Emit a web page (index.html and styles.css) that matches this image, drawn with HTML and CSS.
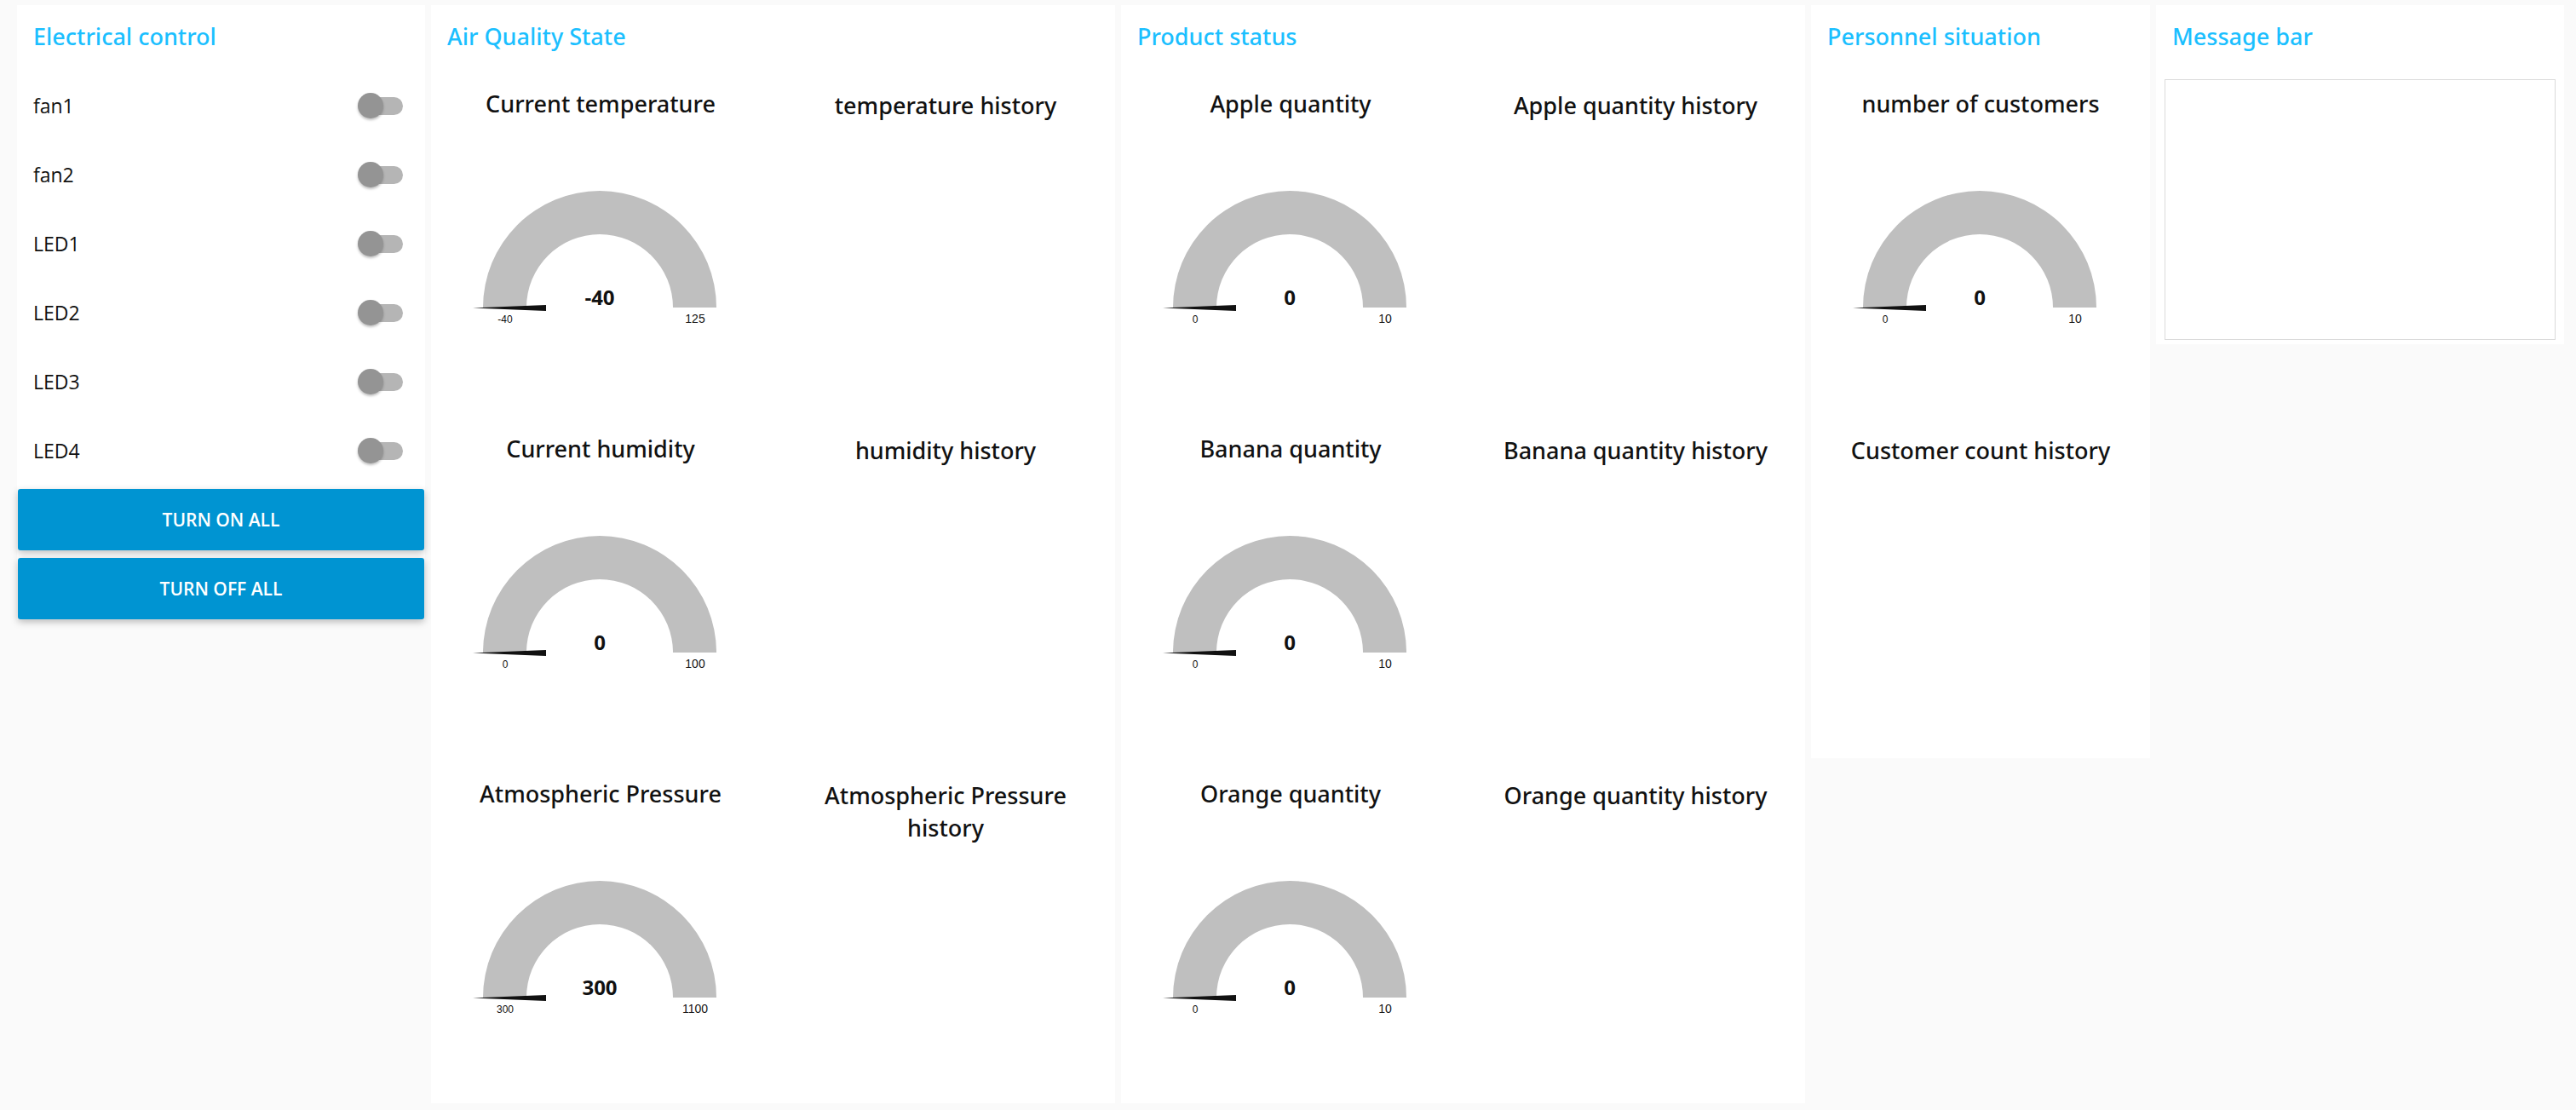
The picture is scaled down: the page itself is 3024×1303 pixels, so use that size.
FILE: index.html
```html
<!DOCTYPE html>
<html lang="en">
<head>
<meta charset="utf-8">
<meta name="viewport" content="width=device-width, initial-scale=1">
<title>Dashboard</title>
<link rel="stylesheet" href="styles.css">
</head>
<body>
<main class="dashboard">
  <section class="panel">
    <h2 class="panel-title">Electrical control</h2>
    <div class="controls">
      <label class="switch-row"><span>fan1</span><input class="switch" type="checkbox" role="switch"></label>
      <label class="switch-row"><span>fan2</span><input class="switch" type="checkbox" role="switch"></label>
      <label class="switch-row"><span>LED1</span><input class="switch" type="checkbox" role="switch"></label>
      <label class="switch-row"><span>LED2</span><input class="switch" type="checkbox" role="switch"></label>
      <label class="switch-row"><span>LED3</span><input class="switch" type="checkbox" role="switch"></label>
      <label class="switch-row"><span>LED4</span><input class="switch" type="checkbox" role="switch"></label>
      <button class="button" type="button">TURN ON ALL</button>
      <button class="button" type="button">TURN OFF ALL</button>
    </div>
  </section>

  <section class="panel">
    <h2 class="panel-title">Air Quality State</h2>
    <div class="cards two-columns">
      <article class="card">
        <h3 class="card-title">Current temperature</h3>
        <svg class="gauge" viewBox="0 0 396 220"><path class="gauge-track" d="M60 173A137 137 0 0 1 334 173H283A86 86 0 0 0 111 173Z"/><path class="gauge-needle" d="M48 173.500L134 170V177Z"/><text class="gauge-value" x="197" y="170">-40</text><text class="gauge-min" x="86" y="191">-40</text><text class="gauge-max" x="309" y="191">125</text></svg>
      </article>
      <article class="card"><h3 class="card-title history">temperature history</h3></article>
      <article class="card">
        <h3 class="card-title">Current humidity</h3>
        <svg class="gauge" viewBox="0 0 396 220"><path class="gauge-track" d="M60 173A137 137 0 0 1 334 173H283A86 86 0 0 0 111 173Z"/><path class="gauge-needle" d="M48 173.500L134 170V177Z"/><text class="gauge-value" x="197" y="170">0</text><text class="gauge-min" x="86" y="191">0</text><text class="gauge-max" x="309" y="191">100</text></svg>
      </article>
      <article class="card"><h3 class="card-title history">humidity history</h3></article>
      <article class="card">
        <h3 class="card-title">Atmospheric Pressure</h3>
        <svg class="gauge" viewBox="0 0 396 220"><path class="gauge-track" d="M60 173A137 137 0 0 1 334 173H283A86 86 0 0 0 111 173Z"/><path class="gauge-needle" d="M48 173.500L134 170V177Z"/><text class="gauge-value" x="197" y="170">300</text><text class="gauge-min" x="86" y="191">300</text><text class="gauge-max" x="309" y="191">1100</text></svg>
      </article>
      <article class="card"><h3 class="card-title history">Atmospheric Pressure history</h3></article>
    </div>
  </section>

  <section class="panel">
    <h2 class="panel-title">Product status</h2>
    <div class="cards two-columns">
      <article class="card">
        <h3 class="card-title">Apple quantity</h3>
        <svg class="gauge" viewBox="0 0 396 220"><path class="gauge-track" d="M60 173A137 137 0 0 1 334 173H283A86 86 0 0 0 111 173Z"/><path class="gauge-needle" d="M48 173.500L134 170V177Z"/><text class="gauge-value" x="197" y="170">0</text><text class="gauge-min" x="86" y="191">0</text><text class="gauge-max" x="309" y="191">10</text></svg>
      </article>
      <article class="card"><h3 class="card-title history">Apple quantity history</h3></article>
      <article class="card">
        <h3 class="card-title">Banana quantity</h3>
        <svg class="gauge" viewBox="0 0 396 220"><path class="gauge-track" d="M60 173A137 137 0 0 1 334 173H283A86 86 0 0 0 111 173Z"/><path class="gauge-needle" d="M48 173.500L134 170V177Z"/><text class="gauge-value" x="197" y="170">0</text><text class="gauge-min" x="86" y="191">0</text><text class="gauge-max" x="309" y="191">10</text></svg>
      </article>
      <article class="card"><h3 class="card-title history">Banana quantity history</h3></article>
      <article class="card">
        <h3 class="card-title">Orange quantity</h3>
        <svg class="gauge" viewBox="0 0 396 220"><path class="gauge-track" d="M60 173A137 137 0 0 1 334 173H283A86 86 0 0 0 111 173Z"/><path class="gauge-needle" d="M48 173.500L134 170V177Z"/><text class="gauge-value" x="197" y="170">0</text><text class="gauge-min" x="86" y="191">0</text><text class="gauge-max" x="309" y="191">10</text></svg>
      </article>
      <article class="card"><h3 class="card-title history">Orange quantity history</h3></article>
    </div>
  </section>

  <section class="panel">
    <h2 class="panel-title">Personnel situation</h2>
    <div class="cards">
      <article class="card">
        <h3 class="card-title">number of customers</h3>
        <svg class="gauge" viewBox="0 0 396 220"><path class="gauge-track" d="M60 173A137 137 0 0 1 334 173H283A86 86 0 0 0 111 173Z"/><path class="gauge-needle" d="M48 173.500L134 170V177Z"/><text class="gauge-value" x="197" y="170">0</text><text class="gauge-min" x="86" y="191">0</text><text class="gauge-max" x="309" y="191">10</text></svg>
      </article>
      <article class="card"><h3 class="card-title history">Customer count history</h3></article>
    </div>
  </section>

  <section class="panel">
    <h2 class="panel-title">Message bar</h2>
    <div class="message-area"><div class="message-box" role="log" aria-label="Messages"></div></div>
  </section>
</main>
</body>
</html>
```
FILE: styles.css
```css
* {
  box-sizing: border-box;
}

body {
  margin: 0;
  background: #fafafa;
  color: #111;
  font-family: "Open Sans", "Noto Sans", sans-serif;
  font-size: 23px;
}

.dashboard {
  display: grid;
  grid-template-columns: 479fr 803fr 803fr 398fr 479fr;
  align-items: start;
  gap: 7px;
  padding: 6px 14px 8px 20px;
}

.panel {
  min-width: 0;
  padding: 0 1px 1px;
  background: #fff;
}

.panel-title {
  height: 82px;
  margin: 0;
  padding: 18px 18px 0;
  color: #1bbfff;
  font-family: "Noto Sans", "Open Sans", sans-serif;
  font-size: 27px;
  font-weight: 500;
  line-height: 38px;
}

.controls {
  display: grid;
  grid-auto-rows: 72px;
  gap: 9px;
}

.switch-row {
  display: flex;
  align-items: center;
  justify-content: space-between;
  padding: 0 25px 0 18px;
}

.switch {
  display: grid;
  align-items: center;
  width: 53px;
  height: 30px;
  margin: 0;
  appearance: none;
  cursor: pointer;
}

.switch::before {
  content: "";
  grid-area: 1 / 1;
  height: 21px;
  margin-left: 3px;
  border-radius: 11px;
  background: #b5b5b5;
}

.switch::after {
  content: "";
  grid-area: 1 / 1;
  width: 30px;
  height: 30px;
  border-radius: 50%;
  background: #949494;
  box-shadow: 0 2px 3px rgba(0, 0, 0, 0.25);
}

.switch:checked::after {
  justify-self: end;
  background: #0094ce;
}

.button {
  border: 0;
  border-radius: 3px;
  background: #0094d2;
  box-shadow: 0 3px 8px rgba(0, 0, 0, 0.26);
  color: #fff;
  font-family: inherit;
  font-size: 21px;
  font-weight: 600;
  cursor: pointer;
}

.cards {
  display: grid;
  grid-auto-rows: 396px;
  gap: 9px;
}

.two-columns {
  grid-template-columns: 1fr 1fr;
}

.card {
  min-width: 0;
}

.card-title {
  margin: 0;
  padding: 15px 30px 0;
  font-family: "Noto Sans", "Open Sans", sans-serif;
  font-size: 27px;
  font-weight: 500;
  line-height: 38px;
  text-align: center;
}

.history {
  padding-top: 17px;
}

.gauge {
  display: block;
  width: 100%;
  margin-top: 47px;
}

.gauge-track {
  fill: #bfbfbf;
}

.gauge-needle {
  fill: #111;
}

.gauge text {
  fill: #111;
  text-anchor: middle;
}

.gauge-value {
  font-size: 24px;
  font-weight: 700;
}

.gauge-min,
.gauge-max {
  font-family: "Liberation Sans", Arial, sans-serif;
}

.gauge-min {
  font-size: 12px;
}

.gauge-max {
  font-size: 14px;
}

.message-area {
  height: 315px;
  padding: 5px 9px 4px;
}

.message-box {
  height: 100%;
  border: 1px solid #dadada;
}
```
